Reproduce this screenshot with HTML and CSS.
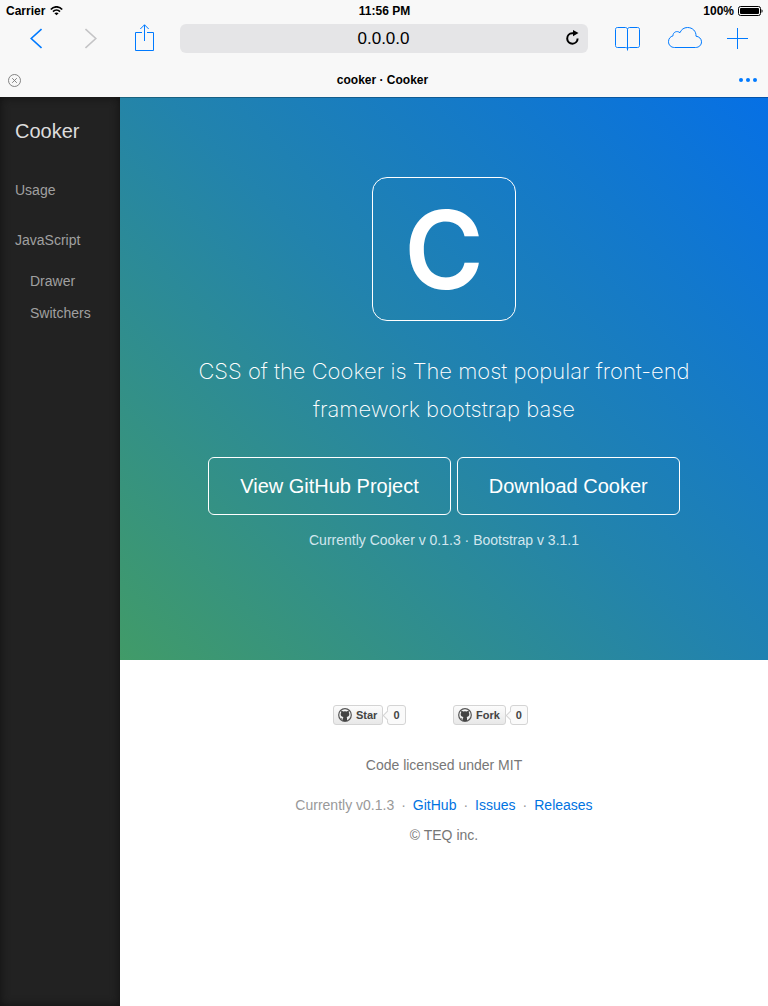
FILE: index.html
```html
<!DOCTYPE html>
<html lang="en">
<head>
<meta charset="utf-8">
<meta name="viewport" content="width=device-width, initial-scale=1">
<title>cooker · Cooker</title>
<link rel="stylesheet" href="styles.css">
</head>
<body>
<header class="browser">
  <div class="status">
    <div class="status-left">
      <span>Carrier</span>
      <svg width="13" height="10" viewBox="0 0 13 10" fill="none" stroke="#000" stroke-width="1.7"><path d="M.8 3.500C4-.1 9-.1 12.200 3.500M3 5.700c2-2 5-2 7 0"/><path d="M6.500 9.200 4.400 7.200c1.200-1 3-1 4.200 0z" fill="#000" stroke="none"/></svg>
    </div>
    <div>11:56 PM</div>
    <div class="status-right">
      <span>100%</span>
      <svg width="25" height="10" viewBox="0 0 25 10"><rect x=".5" y=".5" width="22" height="9" rx="2" fill="none" stroke="#000"/><rect x="2" y="2" width="19" height="6" rx="1"/><path d="M23.500 3.200c1.500.5 1.500 3.100 0 3.600z"/></svg>
    </div>
  </div>
  <div class="toolbar">
    <button class="tool back" aria-label="Back"><svg width="12" height="21" viewBox="0 0 12 21" fill="none" stroke="#007aff" stroke-width="1.600"><path d="M11.500 1 1.200 10.500l10.300 9.500"/></svg></button>
    <button class="tool forward" aria-label="Forward" disabled><svg width="12" height="21" viewBox="0 0 12 21" fill="none" stroke="#c4c4c6" stroke-width="1.600"><path d="M.5 1 10.800 10.500 .5 20"/></svg></button>
    <button class="tool share" aria-label="Share"><svg width="19" height="29" viewBox="0 0 19 29" fill="none" stroke="#007aff"><path d="M7 8.500H.5v18h18v-18H12M9.500 17V.8M5.300 5 9.500.8 13.700 5"/></svg></button>
    <div class="address">
      <input type="text" value="0.0.0.0" aria-label="Address">
      <button class="tool reload" aria-label="Reload"><svg width="15" height="17" viewBox="0 0 15 17"><path d="M9.600 3.300H7.200a5.200 5.200 0 1 0 5.400 5.200" fill="none" stroke="#000" stroke-width="2"/><path d="M8 0l5.500 3L8 6.200z"/></svg></button>
    </div>
    <button class="tool book" aria-label="Bookmarks"><svg width="25" height="25" viewBox="0 -1 25 25" fill="none" stroke="#007aff"><path d="M12.500 23.500V2.500C12.300 1.100 11.500.5 10.500.5h-8c-1.300 0-2 .7-2 2v16c0 1.300.7 2 2 2h8c1 0 1.700.3 2 1.500.3-1.200 1-1.500 2-1.500h8c1.300 0 2-.7 2-2v-16c0-1.300-.7-2-2-2h-8c-1 0-1.800.6-2 2"/></svg></button>
    <button class="tool cloud" aria-label="iCloud tabs"><svg width="34" height="23" viewBox="0 0 34 23" fill="none" stroke="#007aff"><path d="M6.500 20.500C3 20.500.5 18 .5 14.700c0-3 1.800-5.200 4.500-5.900C4.900 5 9 3.300 12 5.700 13.200 2.500 16 .5 19.500.5c5 0 8.800 3.700 8.500 8.700 3.200.4 5.500 2.600 5.500 5.600 0 3.300-2.500 5.700-6 5.700z"/></svg></button>
    <button class="tool plus" aria-label="New tab"><svg width="21" height="21" viewBox="0 0 21 21" stroke="#007aff"><path d="M10.500 0v21M0 10.500h21"/></svg></button>
  </div>
  <div class="tabs">
    <button class="tool" aria-label="Close tab"><svg width="13" height="13" viewBox="0 0 13 13" fill="none" stroke="#777" stroke-width=".9"><circle cx="6.500" cy="6.500" r="6"/><path d="m4.200 4.200 4.600 4.600m0-4.600L4.200 8.800"/></svg></button>
    <span>cooker · Cooker</span>
    <button class="tool tabs-more" aria-label="More"><svg width="18" height="4" viewBox="0 0 18 4" fill="#007aff"><circle cx="2" cy="2" r="2"/><circle cx="9" cy="2" r="2"/><circle cx="16" cy="2" r="2"/></svg></button>
  </div>
</header>
<div class="page">
  <nav class="drawer">
    <a class="brand" href="#">Cooker</a>
    <a class="drawer-link" href="#usage">Usage</a>
    <a class="drawer-link" href="#javascript">JavaScript</a>
    <div class="drawer-sub">
      <a href="#drawer">Drawer</a>
      <a href="#switchers">Switchers</a>
    </div>
  </nav>
  <div class="content">
    <main class="hero">
      <div class="logo">C</div>
      <p class="lead">CSS of the Cooker is The most popular <span class="keep">front-end</span> framework bootstrap base</p>
      <div class="actions">
        <a class="btn" href="#github">View GitHub Project</a>
        <a class="btn" href="#download">Download Cooker</a>
      </div>
      <p class="version">Currently Cooker v 0.1.3 · Bootstrap v 3.1.1</p>
    </main>
    <footer class="footer">
      <div class="social">
        <div class="gh">
          <a class="gh-btn" href="#star"><svg width="14" height="14" viewBox="0 0 14 14"><circle cx="7" cy="7" r="6.300" fill="none" stroke="#555" stroke-width="1.200"/><path d="M3.300 2.700c.8 0 1.400.4 1.900.8a8 8 0 0 1 3.600 0c.5-.4 1.100-.8 1.900-.8.3.7.3 1.300.1 1.900 1.200 2.200.2 4.200-2.200 4.500.3.300.4.700.4 1.200V13H5v-1.500c-1.500.3-1.800-.8-2.400-1.300 1.100-.2 1.300 1 2.400.6 0-.7.1-1.300.4-1.700-2.400-.3-3.400-2.300-2.200-4.500-.2-.6-.2-1.200.1-1.900z" fill="#444"/></svg>Star</a>
          <a class="gh-count" href="#stars">0</a>
        </div>
        <div class="gh">
          <a class="gh-btn" href="#fork"><svg width="14" height="14" viewBox="0 0 14 14"><circle cx="7" cy="7" r="6.300" fill="none" stroke="#555" stroke-width="1.200"/><path d="M3.300 2.700c.8 0 1.400.4 1.900.8a8 8 0 0 1 3.600 0c.5-.4 1.100-.8 1.900-.8.3.7.3 1.300.1 1.900 1.200 2.200.2 4.200-2.200 4.500.3.300.4.700.4 1.200V13H5v-1.500c-1.500.3-1.800-.8-2.400-1.300 1.100-.2 1.300 1 2.400.6 0-.7.1-1.300.4-1.700-2.400-.3-3.400-2.300-2.200-4.500-.2-.6-.2-1.200.1-1.900z" fill="#444"/></svg>Fork</a>
          <a class="gh-count" href="#forks">0</a>
        </div>
      </div>
      <p class="license">Code licensed under MIT</p>
      <div class="links">
        <span>Currently v0.1.3</span><span>·</span><a href="#github">GitHub</a><span>·</span><a href="#issues">Issues</a><span>·</span><a href="#releases">Releases</a>
      </div>
      <p class="copyright">© TEQ inc.</p>
    </footer>
  </div>
</div>
</body>
</html>
```
FILE: styles.css
```css
* { box-sizing: border-box; }
body {
  margin: 0;
  min-height: 100vh;
  display: flex;
  flex-direction: column;
  font: 14px/20px "Liberation Sans", Arial, sans-serif;
  color: #777;
  background: #fff;
}
a { color: #0073e1; text-decoration: none; }
p { margin: 0; }
svg { display: block; }

.browser { background: #f8f8f8; color: #000; }
.status {
  display: grid;
  grid-template-columns: 1fr auto 1fr;
  align-items: center;
  height: 22px;
  padding: 0 5px 0 6px;
  font-size: 12px;
  font-weight: bold;
}
.status-left, .status-right { display: flex; align-items: center; gap: 5px; }
.status-right { justify-content: flex-end; gap: 4px; }
.toolbar { display: flex; align-items: center; height: 33px; padding: 0 20px 0 30px; }
.tool { display: block; padding: 0; border: 0; background: none; flex: none; }
.back { margin-right: 43px; }
.forward { margin-right: 38px; }
.share { margin-right: 26px; }
.book { margin-right: 28px; }
.cloud { margin-right: 25px; }
.address {
  flex: 1;
  display: flex;
  align-items: center;
  height: 29px;
  margin-right: 27px;
  padding: 0 8px;
  border-radius: 6px;
  background: #e5e5e7;
}
.address input {
  flex: 1;
  min-width: 0;
  padding: 0 0 0 14px;
  border: 0;
  background: none;
  text-align: center;
  font: 17px/20px "Liberation Sans", Arial, sans-serif;
  color: #000;
}
.tabs {
  display: grid;
  grid-template-columns: 1fr auto 1fr;
  align-items: center;
  height: 42px;
  padding: 8px 11px 0 8px;
  font-size: 12px;
  font-weight: bold;
}
.tabs-more { justify-self: end; }

.page { flex: 1; display: flex; }
.drawer {
  flex: 0 0 120px;
  background: #222;
  box-shadow: inset 0 0 10px #111;
}
.drawer a { display: block; color: #a0a0a0; }
.drawer .brand { padding: 24px 15px; font-size: 20px; color: #ddd; }
.drawer .drawer-link { padding: 15px; }
.drawer-sub a { padding: 6px 15px 6px 30px; }
.content { flex: 1; min-width: 0; }

.hero {
  display: flex;
  flex-direction: column;
  align-items: center;
  padding: 80px 60px 110px;
  text-align: center;
  color: #fff;
  background: linear-gradient(45deg, #419b68, #2283ad 50%, #0670e5);
  box-shadow: inset 0 1px rgba(0, 0, 0, .25);
}
.logo {
  width: 144px;
  height: 144px;
  margin-bottom: 31px;
  border: 1px solid #fff;
  border-radius: 15px;
  font: 600 108px/144px Inter, sans-serif;
}
.lead { font: 200 22px/38px Inter, sans-serif; margin-bottom: 29px; }
.keep { white-space: nowrap; }
.actions { display: flex; flex-wrap: wrap; justify-content: center; gap: 6px; margin-bottom: 15px; }
.btn {
  padding: 14px 31px;
  border: 1px solid #fff;
  border-radius: 6px;
  font-size: 20px;
  line-height: 28px;
  color: #fff;
}
.version { color: #d2e6ee; }

.footer { padding: 45px 20px; text-align: center; }
.social { display: flex; justify-content: center; gap: 18px; margin-bottom: 30px; }
.gh { display: flex; gap: 4px; width: 102px; font-size: 11px; font-weight: bold; line-height: 18px; }
.gh-btn, .gh-count { border: 1px solid #d4d4d4; border-radius: 3px; color: #444; }
.gh-btn {
  display: flex;
  align-items: center;
  gap: 4px;
  padding: 0 5px 0 4px;
  background: linear-gradient(#fcfcfc, #e8e8e8);
}
.gh-count { position: relative; padding: 0 5px; background: #fafafa; }
.gh-count::before {
  content: "";
  position: absolute;
  left: -4px;
  top: 6px;
  width: 6px;
  height: 6px;
  border: 1px solid #d4d4d4;
  border-width: 0 0 1px 1px;
  background: #fafafa;
  transform: rotate(45deg);
}
.license { margin-bottom: 20px; }
.links { display: flex; justify-content: center; gap: 7px; margin-bottom: 10px; color: #999; }
```
